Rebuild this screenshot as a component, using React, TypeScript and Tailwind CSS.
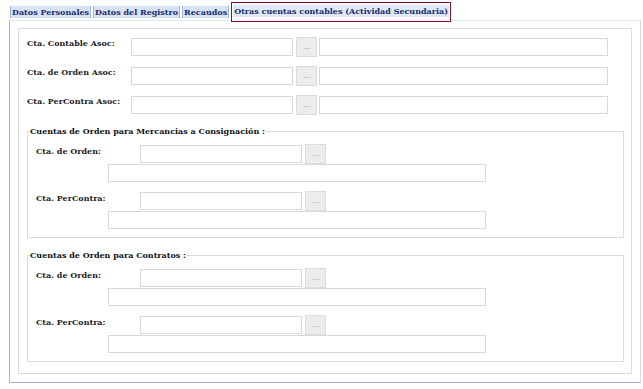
import React from "react";

const inputCls = "h-[18px] border border-[#d9d9d9] bg-white";

const DotsButton = () => (
  <div className="ml-[3px] -mt-[1px] flex h-[20px] w-[21px] items-end justify-center border border-[#dcdcdc] bg-[#ececec] pb-[5px] text-[8px] leading-none text-[#8c8c8c]">
    ...
  </div>
);

const MainRow = ({ label }: { label: string }) => (
  <div className="flex h-[18px] items-start">
    <span className="w-[104px] text-[8px] font-bold leading-[10px] text-[#1e1e1e]">{label}</span>
    <div className={`${inputCls} w-[162px]`} />
    <DotsButton />
    <div className={`${inputCls} ml-[2px] w-[289px]`} />
  </div>
);

const SubRow = ({ label }: { label: string }) => (
  <div className="flex flex-col gap-[1px]">
    <div className="flex h-[18px] items-start">
      <span className="w-[104px] pt-[1px] text-[8px] font-bold leading-[10px] text-[#1e1e1e]">{label}</span>
      <div className={`${inputCls} w-[162px]`} />
      <DotsButton />
    </div>
    <div className={`${inputCls} ml-[72px] w-[378px]`} />
  </div>
);

const Group = ({ title }: { title: string }) => (
  <fieldset className="border border-[#dcdcdc] pl-[2px]">
    <legend className="text-[8px] font-bold leading-[10px] text-[#111]">{title}</legend>
    <div className="flex flex-col gap-[10px] pb-[8px] pl-[6px] pt-[9px]">
      <SubRow label="Cta. de Orden:" />
      <SubRow label="Cta. PerContra:" />
    </div>
  </fieldset>
);

const tabs = ["Datos Personales", "Datos del Registro", "Recaudos"];

export default function App() {
  return (
    <div className="h-[389px] w-[643px] overflow-hidden bg-white font-['DejaVu_Serif',serif]">
      {/* pestañas */}
      <div className="flex h-[20px] items-start gap-[2px] pl-[10px] pt-[2px]">
        {tabs.map((t) => (
          <div
            key={t}
            className="mt-[4px] h-[12px] border-x border-[#9fb4d8] bg-[#d7e2f4] px-[1px] text-[8px] font-bold leading-[12px] text-[#1b2d6b]"
          >
            {t}
          </div>
        ))}
        <div className="relative z-10 h-[20px] border border-[#8a1230] bg-white px-[1px] pt-[2px]">
          <div className="h-[12px] bg-[#dfe8f6] px-[1px] text-[8px] font-bold leading-[12px] text-[#1b2d6b]">
            Otras cuentas contables (Actividad Secundaria)
          </div>
        </div>
      </div>

      {/* panel */}
      <div className="ml-[9px] h-[363px] w-[632px] border border-b-[#aab4cc] border-l-[#aab4cc] border-r-[#d3d9e6] border-t-[#dfe4ee] pb-[8px] pl-[8px] pr-[8px] pt-[7px]">
        <div className="h-[346px] border border-[#dcdcdc] pl-[8px] pr-[7px] pt-[9px]">
          <div className="flex flex-col gap-[11px]">
            <MainRow label="Cta. Contable Asoc:" />
            <MainRow label="Cta. de Orden Asoc:" />
            <MainRow label="Cta. PerContra Asoc:" />
          </div>
          <div className="mt-[12px] flex flex-col gap-[12px]">
            <Group title="Cuentas de Orden para Mercancias a Consignación :" />
            <Group title="Cuentas de Orden para Contratos :" />
          </div>
        </div>
      </div>
    </div>
  );
}
